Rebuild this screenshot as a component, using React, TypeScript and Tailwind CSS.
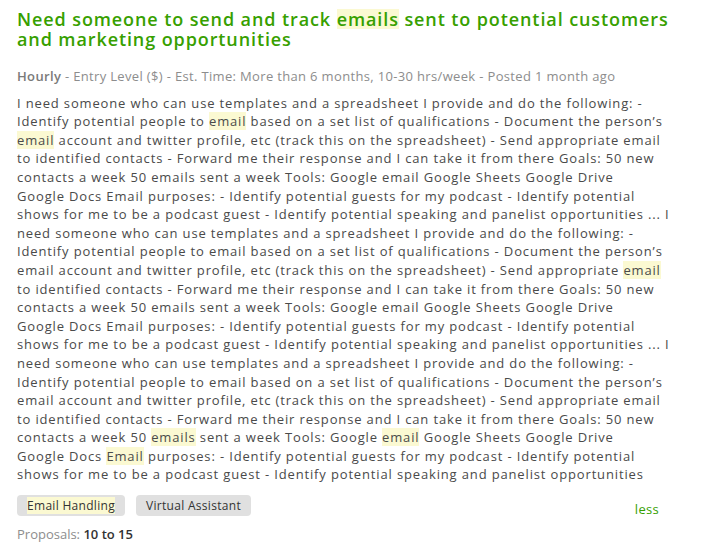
import React from 'react';

const lines: (string | { hl: string })[][] = [
  ['I need someone who can use templates and a spreadsheet I provide and do the following: -'],
  ['Identify potential people to ', { hl: 'email' }, ' based on a set list of qualifications - Document the person\u2019s'],
  [{ hl: 'email' }, ' account and twitter profile, etc (track this on the spreadsheet) - Send appropriate email'],
  ['to identified contacts - Forward me their response and I can take it from there Goals: 50 new'],
  ['contacts a week 50 emails sent a week Tools: Google email Google Sheets Google Drive'],
  ['Google Docs Email purposes: - Identify potential guests for my podcast - Identify potential'],
  ['shows for me to be a podcast guest - Identify potential speaking and panelist opportunities ... I'],
  ['need someone who can use templates and a spreadsheet I provide and do the following: -'],
  ['Identify potential people to email based on a set list of qualifications - Document the person\u2019s'],
  ['email account and twitter profile, etc (track this on the spreadsheet) - Send appropriate ', { hl: 'email' }],
  ['to identified contacts - Forward me their response and I can take it from there Goals: 50 new'],
  ['contacts a week 50 emails sent a week Tools: Google email Google Sheets Google Drive'],
  ['Google Docs Email purposes: - Identify potential guests for my podcast - Identify potential'],
  ['shows for me to be a podcast guest - Identify potential speaking and panelist opportunities ... I'],
  ['need someone who can use templates and a spreadsheet I provide and do the following: -'],
  ['Identify potential people to email based on a set list of qualifications - Document the person\u2019s'],
  ['email account and twitter profile, etc (track this on the spreadsheet) - Send appropriate email'],
  ['to identified contacts - Forward me their response and I can take it from there Goals: 50 new'],
  ['contacts a week 50 ', { hl: 'emails' }, ' sent a week Tools: Google ', { hl: 'email' }, ' Google Sheets Google Drive'],
  ['Google Docs ', { hl: 'Email' }, ' purposes: - Identify potential guests for my podcast - Identify potential'],
  ['shows for me to be a podcast guest - Identify potential speaking and panelist opportunities'],
];

function Hl({ children }: { children: React.ReactNode }) {
  return <span className="bg-[#fbf9d2]">{children}</span>;
}

export default function App() {
  return (
    <div className="min-h-[552px] w-[717px] bg-white px-[17px] pt-[9px] font-['Open_Sans',sans-serif]">
      <h1 className="text-[18px] font-semibold leading-[20px] tracking-[0.9px] text-[#37a000]">
        Need someone to send and track <span className="inline-block bg-[#fbf9d2]">emails</span> sent to
        potential customers
        <br />
        and marketing opportunities
      </h1>

      <p className="mt-[18px] text-[13px] leading-[18.6px] tracking-[0.34px] text-[#8d8d8d]">
        <span className="font-semibold text-[#7a7a7a]">Hourly</span> - Entry Level ($) - Est. Time: More
        than 6 months, 10-30 hrs/week - Posted 1 month ago
      </p>

      <div className="mt-[8px] text-[13px] leading-[18.6px] tracking-[0.85px] text-[#4a4a4a]">
        {lines.map((line, i) => (
          <div key={i} className="whitespace-nowrap">
            {line.map((part, j) =>
              typeof part === 'string' ? <span key={j}>{part}</span> : <Hl key={j}>{part.hl}</Hl>
            )}
          </div>
        ))}
      </div>

      <div className="mt-[11px] flex items-start justify-between pr-[41px]">
        <div className="flex gap-[11px]">
          <span className="rounded-[4px] bg-[#e0e0e0] px-[10px] py-[3px] text-[12px] leading-[15px] tracking-[0.3px] text-[#333]">
            <Hl>Email Handling</Hl>
          </span>
          <span className="rounded-[4px] bg-[#e0e0e0] px-[10px] py-[3px] text-[12px] leading-[15px] tracking-[0.3px] text-[#333]">
            Virtual Assistant
          </span>
        </div>
        <span className="mt-[7px] text-[13px] font-medium leading-[15px] tracking-[0.3px] text-[#37a000]">
          less
        </span>
      </div>

      <p className="mt-[8px] text-[13px] leading-[18px] text-[#8d8d8d]">
        Proposals: <span className="font-semibold text-[#333]">10 to 15</span>
      </p>
    </div>
  );
}
